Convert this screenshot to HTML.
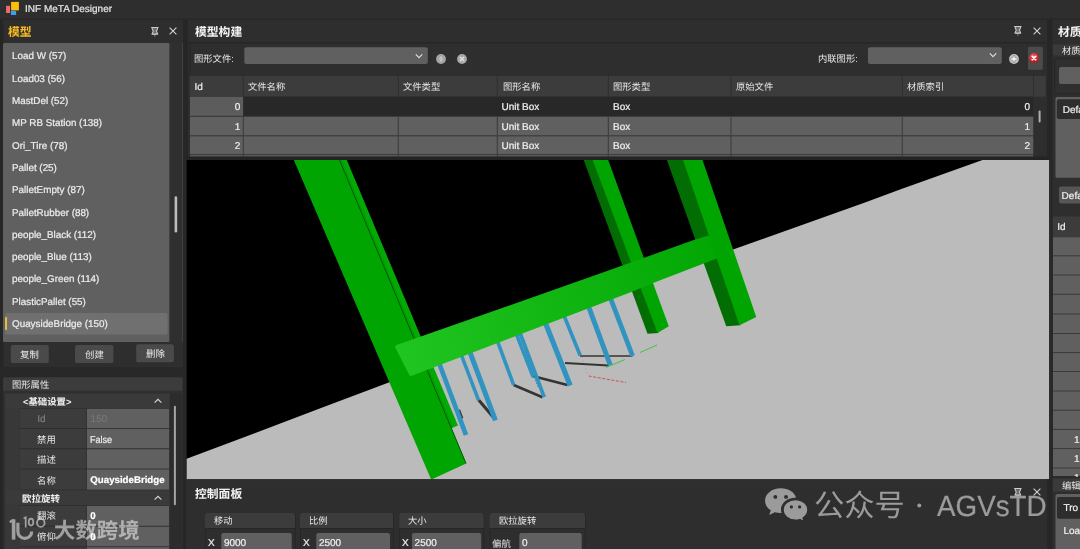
<!DOCTYPE html><html lang="zh"><head><meta charset="utf-8"><title>INF MeTA Designer</title><style>html,body{margin:0;padding:0;background:#2e2e2e}#a{position:relative;width:1080px;height:549px;overflow:hidden;background:#2e2e2e;font-family:"Liberation Sans",sans-serif;text-rendering:geometricPrecision}#a>*,#l>*{position:absolute}#l{left:0;top:0;width:1080px;height:549px;will-change:transform}.t{white-space:nowrap;-webkit-text-stroke:0.22px}.c{overflow:visible;display:block}.c text{font-family:"Liberation Sans","Noto Sans CJK SC",sans-serif;white-space:pre}</style></head><body><div id="a">
<svg class="c" style="left:0;top:0" width="1080" height="549" viewBox="0 0 1080 549"><rect x="0" y="0" width="1080" height="19" fill="#2e2e2e"/>
<rect x="0" y="18.7" width="1080" height="1" fill="#272727"/>
<rect x="11.1" y="1.9" width="7.8" height="8.5" fill="#fdbd0a"/>
<rect x="6.1" y="5.8" width="3.9" height="7.2" fill="#f26a6c"/>
<rect x="10.9" y="10.9" width="5.2" height="4.1" fill="#38a0ee"/>
<rect x="0" y="20" width="183" height="529" fill="#2e2e2e"/>
<rect x="0" y="20" width="3.2" height="529" fill="#262626"/>
<rect x="183" y="20" width="5" height="529" fill="#262626"/>
<rect x="3" y="43" width="179.3" height="299" fill="#2f2f2f" rx="1.5"/>
<rect x="3" y="43" width="166.5" height="299" fill="#606060" rx="1.5"/>
<rect x="169.5" y="43" width="0.8" height="299.4" fill="#3c3c3c"/>
<rect x="174.6" y="196.3" width="2.6" height="36.3" fill="#bcbcbc" rx="1.3"/>
<rect x="182.1" y="43" width="0.8" height="299" fill="#474747"/>
<rect x="5" y="313" width="162.5" height="21.5" fill="#707070" rx="2.5"/>
<rect x="5.1" y="316.9" width="1.9" height="13.1" fill="#ecc03a" rx="0.8"/>
<rect x="10.8" y="345" width="38" height="18" fill="#4a4a4a" rx="2"/>
<rect x="75" y="345" width="38.4" height="18" fill="#4a4a4a" rx="2"/>
<rect x="136.2" y="344.2" width="37.7" height="18" fill="#4a4a4a" rx="2"/>
<rect x="0" y="367" width="183" height="10.3" fill="#282828"/>
<rect x="3" y="377" width="180" height="172" fill="#2f2f2f"/>
<rect x="3.1" y="377.4" width="179.5" height="13.4" fill="#3c3c3c" rx="1.5"/>
<rect x="5" y="393.5" width="164.5" height="155.500" fill="#383838"/>
<rect x="19.7" y="408.2" width="149.3" height="140.8" fill="#2c2c2c"/>
<rect x="170" y="393.5" width="12.5" height="155.500" fill="#2c2c2c"/>
<rect x="173.9" y="405.8" width="2" height="99.4" fill="#a4a4a4" rx="1"/>
<rect x="5" y="394" width="164.5" height="14.2" fill="#3a3a3a"/>
<rect x="19.7" y="408.8" width="66.8" height="19.2" fill="#3c3c3c"/>
<rect x="87" y="408.8" width="82" height="19.2" fill="#606060"/>
<rect x="19.7" y="428.8" width="66.8" height="19.5" fill="#3c3c3c"/>
<rect x="87" y="428.8" width="82" height="19.5" fill="#606060"/>
<rect x="19.7" y="449.2" width="66.8" height="19.4" fill="#3c3c3c"/>
<rect x="87" y="449.2" width="82" height="19.4" fill="#606060"/>
<rect x="19.7" y="469.4" width="66.8" height="20.2" fill="#3c3c3c"/>
<rect x="87" y="469.4" width="82" height="20.2" fill="#606060"/>
<rect x="5" y="490.2" width="164.5" height="15" fill="#3a3a3a"/>
<rect x="19.7" y="505.9" width="66.8" height="19.9" fill="#3c3c3c"/>
<rect x="87" y="505.9" width="82" height="19.9" fill="#606060"/>
<rect x="19.7" y="526.7" width="66.8" height="19.6" fill="#3c3c3c"/>
<rect x="87" y="526.7" width="82" height="19.6" fill="#606060"/>
<rect x="19.7" y="547.1" width="66.8" height="4.9" fill="#3c3c3c"/>
<rect x="87" y="547.1" width="82" height="4.9" fill="#606060"/>
<rect x="188" y="20" width="859" height="140" fill="#2e2e2e"/>
<rect x="1047" y="20" width="6" height="529" fill="#262626"/>
<rect x="189.3" y="42.3" width="857" height="1" fill="#242424"/>
<rect x="189.3" y="42.3" width="1" height="33" fill="#262626"/>
<rect x="244.3" y="47.3" width="183.5" height="16.7" fill="#606060" rx="2"/>
<rect x="432" y="47" width="19" height="23" fill="#2f2f2f" rx="1"/>
<rect x="455" y="47" width="16" height="23" fill="#2f2f2f" rx="1"/>
<rect x="868" y="47.3" width="133.8" height="16.7" fill="#606060" rx="2"/>
<rect x="1006" y="47" width="17" height="23" fill="#2f2f2f" rx="1"/>
<rect x="1028" y="46.8" width="14.9" height="23" fill="#4b4b4b" rx="1.5"/>
<rect x="190" y="76" width="855.6" height="80.600" fill="#2e2e2e"/>
<rect x="190" y="76" width="855.6" height="20.7" fill="#3c3c3c"/>
<rect x="242.8" y="76" width="1" height="20.7" fill="#2f2f2f"/>
<rect x="397.8" y="76" width="1" height="20.7" fill="#2f2f2f"/>
<rect x="496.8" y="76" width="1" height="20.7" fill="#2f2f2f"/>
<rect x="607.8" y="76" width="1" height="20.7" fill="#2f2f2f"/>
<rect x="730.5" y="76" width="1" height="20.7" fill="#2f2f2f"/>
<rect x="901.8" y="76" width="1" height="20.7" fill="#2f2f2f"/>
<rect x="1033" y="76" width="1" height="20.7" fill="#2f2f2f"/>
<rect x="190" y="96.8" width="843.5" height="59.8" fill="#2f2f2f"/>
<rect x="190" y="96.8" width="53.3" height="19" fill="#5c5c5c"/>
<rect x="243.3" y="96.8" width="790.2" height="19" fill="#282828"/>
<rect x="190" y="116.7" width="843.5" height="18.7" fill="#606060"/>
<rect x="242.8" y="116.7" width="1" height="18.7" fill="#3a3a3a"/>
<rect x="397.8" y="116.7" width="1" height="18.7" fill="#3a3a3a"/>
<rect x="496.8" y="116.7" width="1" height="18.7" fill="#3a3a3a"/>
<rect x="607.8" y="116.7" width="1" height="18.7" fill="#3a3a3a"/>
<rect x="730.5" y="116.7" width="1" height="18.7" fill="#3a3a3a"/>
<rect x="901.8" y="116.7" width="1" height="18.7" fill="#3a3a3a"/>
<rect x="190" y="136.3" width="843.5" height="18" fill="#606060"/>
<rect x="242.8" y="136.3" width="1" height="18" fill="#3a3a3a"/>
<rect x="397.8" y="136.3" width="1" height="18" fill="#3a3a3a"/>
<rect x="496.8" y="136.3" width="1" height="18" fill="#3a3a3a"/>
<rect x="607.8" y="136.3" width="1" height="18" fill="#3a3a3a"/>
<rect x="730.5" y="136.3" width="1" height="18" fill="#3a3a3a"/>
<rect x="901.8" y="136.3" width="1" height="18" fill="#3a3a3a"/>
<rect x="190" y="155.1" width="843.5" height="1.5" fill="#606060"/>
<rect x="242.8" y="155.1" width="1" height="1.5" fill="#3a3a3a"/>
<rect x="397.8" y="155.1" width="1" height="1.5" fill="#3a3a3a"/>
<rect x="496.8" y="155.1" width="1" height="1.5" fill="#3a3a3a"/>
<rect x="607.8" y="155.1" width="1" height="1.5" fill="#3a3a3a"/>
<rect x="730.5" y="155.1" width="1" height="1.5" fill="#3a3a3a"/>
<rect x="901.8" y="155.1" width="1" height="1.5" fill="#3a3a3a"/>
<rect x="1033.5" y="97" width="12.1" height="59.6" fill="#2e2e2e"/>
<rect x="1038.6" y="110.5" width="2" height="12" fill="#b0b0b0" rx="1"/>
<rect x="186" y="156.6" width="863" height="3.4" fill="#242424"/>
<svg x="186.5" y="160" width="862.5" height="319.1" viewBox="186.5 160 862.5 319.1"><defs><linearGradient id="bm" gradientUnits="userSpaceOnUse" x1="400" y1="360" x2="715" y2="250"><stop offset="0" stop-color="#20c522"/><stop offset="1" stop-color="#03a704"/></linearGradient></defs><rect x="186" y="160" width="864" height="320" fill="#000"/><path d="M186 459.1L321 408.1L388.75 382.5L733.75 249.2L865 202.5L900 189.6L982.5 160H1050V480H186Z" fill="#bbbbbb"/><path d="M583.7 160L647.5 333.75L658.5 333L594 160Z" fill="#026d02"/><path d="M592.6 160L657.5 333L668.75 326.25L608.2 160Z" fill="#01a501"/><path d="M666.9 160L726.25 326.25L740.6 325.3L684.4 160Z" fill="#026d02"/><path d="M459 409.8L462.2 418.5" stroke="#343434" stroke-width="2.4"/><path d="M478.7 400L493.7 417.8" stroke="#343434" stroke-width="3"/><path d="M513.7 385L542.5 397.2" stroke="#343434" stroke-width="2.6"/><path d="M532.5 376L567.5 385" stroke="#343434" stroke-width="2.5"/><path d="M565 363L608.7 365.5" stroke="#343434" stroke-width="1.8"/><path d="M580 356L632.5 356" stroke="#343434" stroke-width="1.4"/><path d="M438.03 360.26L466 435" stroke="#3193c0" stroke-width="4.7"/><path d="M461.21 354.61L478.6 400.4" stroke="#3193c0" stroke-width="3.5"/><path d="M468.83 349.24L495.4 420.3" stroke="#3193c0" stroke-width="5"/><path d="M497.72 341.82L513.6 384.8" stroke="#3193c0" stroke-width="3.6"/><path d="M515.61 332.29L533 377" stroke="#3193c0" stroke-width="3.4"/><path d="M518.71 329.38L544.2 397.2" stroke="#3193c0" stroke-width="3.8"/><path d="M544.28 320.16L570.2 385.5" stroke="#3193c0" stroke-width="5.2"/><path d="M563.57 314.46L580.2 355.5" stroke="#3193c0" stroke-width="3.6"/><path d="M587.2 302.9L610.2 365" stroke="#3193c0" stroke-width="5"/><path d="M609.49 295.52L632.6 356" stroke="#3193c0" stroke-width="4.8"/><path d="M518.6 334.8L538.6 387" stroke="#3193c0" stroke-width="2.2" stroke-dasharray="1.6 1.4"/><path d="M606 367.5L625 359.5M640 352.5L657 345" stroke="#35c135" stroke-width="0.9"/><path d="M588.7 376L626 382.5" stroke="#d24545" stroke-width="0.9" stroke-dasharray="3 1.6"/><path d="M578.7 348.7L587.5 373.7" stroke="#6a6ad8" stroke-width="0.7" stroke-dasharray="1 3.2" opacity="0.8"/><path d="M339.2 160L346.8 160L458 425.4L451.4 428.2Z" fill="#03a904"/><path d="M293.8 160L339.8 160L466.2 463.4L431.2 479.6Z" fill="#01a501"/><path d="M339.5 160L466 463.4" stroke="#035a03" stroke-width="1"/><path d="M341.2 160L452.6 427.6" stroke="#068a06" stroke-width="0.6"/><path d="M396.6 345.1L600 273.6L693.75 240L712 234.4L720 257.2L653.75 282.8L630 292.6L411.8 375.7Q409.8 376.5 409 374.5L395.3 347.5Q394.5 345.8 396.6 345.1Z" fill="url(#bm)"/><path d="M683.1 160L739.5 325.3L756.25 317L702.5 160Z" fill="#01a501"/></svg>
<rect x="183" y="160" width="3.4" height="319" fill="#272727"/>
<rect x="1049" y="160" width="2" height="319" fill="#2c2c2c"/>
<rect x="186" y="479" width="861" height="70" fill="#2e2e2e"/>
<rect x="186" y="479" width="861" height="1.5" fill="#333"/>
<rect x="205" y="513" width="90.6" height="39" fill="#262626" rx="2"/>
<rect x="205.9" y="514" width="88.8" height="38" fill="#2e2e2e"/>
<rect x="205" y="513" width="90" height="15" fill="#3c3c3c" rx="2"/>
<rect x="205" y="526" width="90" height="2" fill="#3c3c3c"/>
<rect x="205" y="528" width="90.6" height="1" fill="#272727"/>
<rect x="300" y="513" width="93.6" height="39" fill="#262626" rx="2"/>
<rect x="300.9" y="514" width="91.8" height="38" fill="#2e2e2e"/>
<rect x="300" y="513" width="93" height="15" fill="#3c3c3c" rx="2"/>
<rect x="300" y="526" width="93" height="2" fill="#3c3c3c"/>
<rect x="300" y="528" width="93.6" height="1" fill="#272727"/>
<rect x="399.3" y="513" width="85" height="39" fill="#262626" rx="2"/>
<rect x="400.2" y="514" width="83.2" height="38" fill="#2e2e2e"/>
<rect x="399.3" y="513" width="84.4" height="15" fill="#3c3c3c" rx="2"/>
<rect x="399.3" y="526" width="84.4" height="2" fill="#3c3c3c"/>
<rect x="399.3" y="528" width="85" height="1" fill="#272727"/>
<rect x="489.5" y="513" width="96.1" height="39" fill="#262626" rx="2"/>
<rect x="490.4" y="514" width="94.3" height="38" fill="#2e2e2e"/>
<rect x="489.5" y="513" width="95.5" height="15" fill="#3c3c3c" rx="2"/>
<rect x="489.5" y="526" width="95.5" height="2" fill="#3c3c3c"/>
<rect x="489.5" y="528" width="96.1" height="1" fill="#272727"/>
<rect x="221.3" y="533" width="70.4" height="19" fill="#606060" rx="2"/>
<rect x="316.3" y="533" width="73.7" height="19" fill="#606060" rx="2"/>
<rect x="412" y="533" width="69.2" height="19" fill="#606060" rx="2"/>
<rect x="519.3" y="533" width="62.4" height="19" fill="#606060" rx="2"/>
<rect x="917.3" y="503.4" width="4" height="4" fill="#9b9b9b" rx="2"/>
<rect x="1052.5" y="20" width="27.5" height="529" fill="#2e2e2e"/>
<rect x="1052.8" y="44.5" width="27.2" height="11" fill="#3a3a3a"/>
<rect x="1054.6" y="58.8" width="27.4" height="35" fill="#2f2f2f" rx="1" stroke="#262626"/>
<rect x="1059" y="67" width="25" height="17" fill="#606060" rx="2"/>
<rect x="1055.5" y="97" width="26.5" height="80.8" fill="#606060" rx="1.5"/>
<rect x="1056.8" y="99.3" width="25.2" height="19.7" fill="#2d2d2d" rx="2"/>
<rect x="1059" y="186.5" width="25" height="16.9" fill="#555" rx="2"/>
<rect x="1053" y="216.5" width="27" height="20.8" fill="#3c3c3c"/>
<rect x="1053" y="237.3" width="27" height="238.7" fill="#606060"/>
<rect x="1053" y="255.3" width="27" height="1" fill="#3a3a3a"/>
<rect x="1053" y="274.5" width="27" height="1" fill="#3a3a3a"/>
<rect x="1053" y="293.8" width="27" height="1" fill="#3a3a3a"/>
<rect x="1053" y="313.5" width="27" height="1" fill="#3a3a3a"/>
<rect x="1053" y="333" width="27" height="1" fill="#3a3a3a"/>
<rect x="1053" y="352.1" width="27" height="1" fill="#3a3a3a"/>
<rect x="1053" y="371" width="27" height="1" fill="#3a3a3a"/>
<rect x="1053" y="390.5" width="27" height="1" fill="#3a3a3a"/>
<rect x="1053" y="409.7" width="27" height="1" fill="#3a3a3a"/>
<rect x="1053" y="428.9" width="27" height="1" fill="#3a3a3a"/>
<rect x="1053" y="448.1" width="27" height="1" fill="#3a3a3a"/>
<rect x="1053" y="467.5" width="27" height="1" fill="#3a3a3a"/>
<rect x="1053" y="476" width="27" height="2.5" fill="#2b2b2b"/>
<rect x="1053" y="478.5" width="27" height="13" fill="#3a3a3a"/>
<rect x="1055.5" y="494" width="26.5" height="58" fill="#606060" rx="2"/>
<rect x="1057" y="497" width="25" height="21.7" fill="#2d2d2d" rx="2"/></svg>
<div id="l">
<div class="t" style="top:3px;font-size:10px;line-height:14px;color:#e4e4e4;left:25px;">INF MeTA Designer</div>
<svg class="c" style="left:8px;top:23.14px;" width="23.6" height="16.52" fill="#f6bb24"><text x="0" y="12.51" font-size="11.8" font-weight="bold">模型</text></svg>
<svg class="c" style="left:150.35px;top:26.06px" width="9.7" height="12.61" viewBox="0 0 10 13" fill="none" stroke="#cdcdcd" stroke-width="1.1"><path d="M1.2 1.5H8.8M2 1.6Q2.3 4.2 3.5 5.2Q2.6 6.600 2.1 8.2H7.9Q7.4 6.600 6.500 5.2Q7.7 4.2 8 1.600" fill="#6c6c6c"/><path d="M2.2 8.3Q5 9.8 7.8 8.3" stroke-width="0.9"/><path d="M5 9.2V11.600" stroke-opacity="0.3"/></svg>
<svg class="c" style="left:168.4px;top:26px" width="10" height="10" viewBox="-5 -5 10 10" fill="none" stroke="#d4d4d4" stroke-width="1.05"><path d="M-3.4 -3.4L3.4 3.4M3.4 -3.4L-3.4 3.4"/></svg>
<div class="t" style="top:50px;font-size:9.85px;line-height:14px;color:#ececec;left:12px;">Load W (57)</div>
<div class="t" style="top:73px;font-size:9.85px;line-height:14px;color:#ececec;left:12px;">Load03 (56)</div>
<div class="t" style="top:95px;font-size:9.85px;line-height:14px;color:#ececec;left:12px;">MastDel (52)</div>
<div class="t" style="top:117px;font-size:9.85px;line-height:14px;color:#ececec;left:12px;">MP RB Station (138)</div>
<div class="t" style="top:140px;font-size:9.85px;line-height:14px;color:#ececec;left:12px;">Ori_Tire (78)</div>
<div class="t" style="top:162px;font-size:9.85px;line-height:14px;color:#ececec;left:12px;">Pallet (25)</div>
<div class="t" style="top:184px;font-size:9.85px;line-height:14px;color:#ececec;left:12px;">PalletEmpty (87)</div>
<div class="t" style="top:207px;font-size:9.85px;line-height:14px;color:#ececec;left:12px;">PalletRubber (88)</div>
<div class="t" style="top:229px;font-size:9.85px;line-height:14px;color:#ececec;left:12px;">people_Black (112)</div>
<div class="t" style="top:251px;font-size:9.85px;line-height:14px;color:#ececec;left:12px;">people_Blue (113)</div>
<div class="t" style="top:273px;font-size:9.85px;line-height:14px;color:#ececec;left:12px;">people_Green (114)</div>
<div class="t" style="top:296px;font-size:9.85px;line-height:14px;color:#ececec;left:12px;">PlasticPallet (55)</div>
<div class="t" style="top:318px;font-size:9.85px;line-height:14px;color:#ececec;left:12px;">QuaysideBridge (150)</div>
<svg class="c" style="left:20.4px;top:348.02px;" width="18.8" height="13.16" fill="#e8e8e8"><text x="0" y="9.96" font-size="9.4">复制</text></svg>
<svg class="c" style="left:84.8px;top:348.02px;" width="18.8" height="13.16" fill="#e8e8e8"><text x="0" y="9.96" font-size="9.4">创建</text></svg>
<svg class="c" style="left:145.65px;top:347.22px;" width="18.8" height="13.16" fill="#e8e8e8"><text x="0" y="9.96" font-size="9.4">删除</text></svg>
<svg class="c" style="left:11.8px;top:377.99px;" width="37.2" height="13.02" fill="#e8e8e8"><text x="0" y="9.86" font-size="9.3">图形属性</text></svg>
<svg class="c" style="left:23.3px;top:394.82px;" width="48.69" height="13.16" fill="#f0f0f0"><text x="0" y="9.96" font-size="9.4" font-weight="bold">&lt;基础设置&gt;</text></svg>
<svg class="c" style="left:152.5px;top:397.3px" width="10" height="8" viewBox="-5 -4 10 8" fill="none" stroke="#d8d8d8" stroke-width="1.1"><path d="M-3.4 1.7L0 -1.7L3.4 1.7"/></svg>
<div class="t" style="top:413px;font-size:10px;line-height:14px;color:#7d7d7d;left:37.3px;">Id</div>
<div class="t" style="top:413px;font-size:10px;line-height:14px;color:#767676;left:90.6px;">150</div>
<svg class="c" style="left:36.9px;top:433.12px;" width="18.8" height="13.16" fill="#e4e4e4"><text x="0" y="9.96" font-size="9.4">禁用</text></svg>
<div class="t" style="top:434px;font-size:10px;line-height:14px;color:#ececec;left:90.3px;transform:scaleX(0.9);transform-origin:0 0;">False</div>
<svg class="c" style="left:36.9px;top:453.42px;" width="18.8" height="13.16" fill="#e4e4e4"><text x="0" y="9.96" font-size="9.4">描述</text></svg>
<svg class="c" style="left:36.9px;top:474.02px;" width="18.8" height="13.16" fill="#e4e4e4"><text x="0" y="9.96" font-size="9.4">名称</text></svg>
<div class="t" style="top:474px;font-size:9.7px;line-height:14px;color:#ffffff;font-weight:bold;left:90.3px;">QuaysideBridge</div>
<svg class="c" style="left:22.3px;top:491.65px;" width="38" height="13.3" fill="#f0f0f0"><text x="0" y="10.07" font-size="9.5" font-weight="bold">欧拉旋转</text></svg>
<svg class="c" style="left:152.5px;top:494.2px" width="10" height="8" viewBox="-5 -4 10 8" fill="none" stroke="#d8d8d8" stroke-width="1.1"><path d="M-3.4 1.7L0 -1.7L3.4 1.7"/></svg>
<svg class="c" style="left:36.9px;top:509.32px;" width="18.8" height="13.16" fill="#e4e4e4"><text x="0" y="9.96" font-size="9.4">翻滚</text></svg>
<div class="t" style="top:510px;font-size:9.7px;line-height:14px;color:#ffffff;font-weight:bold;left:90.3px;">0</div>
<svg class="c" style="left:36.9px;top:530.42px;" width="18.8" height="13.16" fill="#e4e4e4"><text x="0" y="9.96" font-size="9.4">俯仰</text></svg>
<div class="t" style="top:531px;font-size:9.7px;line-height:14px;color:#ffffff;font-weight:bold;left:90.3px;">0</div>
<svg class="c" style="left:36.9px;top:553.42px;" width="5.64" height="13.16" fill="#e4e4e4"></svg>
<svg class="c" style="left:194.8px;top:22.94px;" width="47.2" height="16.52" fill="#f4f4f4"><text x="0" y="12.51" font-size="11.8" font-weight="bold">模型构建</text></svg>
<svg class="c" style="left:1013.15px;top:25.46px" width="9.7" height="12.61" viewBox="0 0 10 13" fill="none" stroke="#cdcdcd" stroke-width="1.1"><path d="M1.2 1.5H8.8M2 1.6Q2.3 4.2 3.5 5.2Q2.6 6.600 2.1 8.2H7.9Q7.4 6.600 6.500 5.2Q7.7 4.2 8 1.600" fill="#6c6c6c"/><path d="M2.2 8.3Q5 9.8 7.8 8.3" stroke-width="0.9"/><path d="M5 9.2V11.600" stroke-opacity="0.3"/></svg>
<svg class="c" style="left:1031.6px;top:25.8px" width="10" height="10" viewBox="-5 -5 10 10" fill="none" stroke="#d4d4d4" stroke-width="1.05"><path d="M-3.4 -3.4L3.4 3.4M3.4 -3.4L-3.4 3.4"/></svg>
<svg class="c" style="left:194.2px;top:51.89px;" width="39.79" height="13.02" fill="#e8e8e8"><text x="0" y="9.86" font-size="9.3">图形文件:</text></svg>
<svg class="c" style="left:414px;top:51.6px" width="10" height="8" viewBox="-5 -4 10 8" fill="none" stroke="#e0e0e0" stroke-width="1.1"><path d="M-3.2 -1.6L0 1.7L3.2 -1.6"/></svg>
<svg class="c" style="left:434.5px;top:52.8px" width="12" height="12" viewBox="-6 -6 12 12"><circle r="4.9" fill="#ababab"/><circle r="3.6" fill="none" stroke="#9c9c9c" stroke-width="0.8"/><path d="M0 -2.6V2.6" stroke="#d8d8d8" stroke-width="1.1"/><path d="M-2.4 0H2.4" stroke="#bcbcbc" stroke-width="1"/></svg>
<svg class="c" style="left:456px;top:52.8px" width="12" height="12" viewBox="-6 -6 12 12"><circle r="4.9" fill="#a9a9a9"/><path d="M-2 -2L2 2M2 -2L-2 2" stroke="#dedede" stroke-width="1.5"/></svg>
<svg class="c" style="left:818.3px;top:51.89px;" width="39.79" height="13.02" fill="#e8e8e8"><text x="0" y="9.86" font-size="9.3">内联图形:</text></svg>
<svg class="c" style="left:988.2px;top:51.4px" width="10" height="8" viewBox="-5 -4 10 8" fill="none" stroke="#e0e0e0" stroke-width="1.1"><path d="M-3.2 -1.6L0 1.7L3.2 -1.6"/></svg>
<svg class="c" style="left:1007.5px;top:52.5px" width="12" height="12" viewBox="-6 -6 12 12"><circle r="4.9" fill="#c4c4c4"/><path d="M-3.4 0H3.4M0 -3.4V3.4" stroke="#7c7c7c" stroke-width="2.6"/><path d="M-2.8 0H2.8M0 -2.8V2.8" stroke="#fff" stroke-width="1.3"/></svg>
<svg class="c" style="left:1028.2px;top:52.4px" width="12" height="12" viewBox="-6 -6 12 12"><defs><radialGradient id="rg" cx="0.4" cy="0.3" r="0.8"><stop offset="0" stop-color="#ee5a5a"/><stop offset="0.6" stop-color="#d02626"/><stop offset="1" stop-color="#9c1616"/></radialGradient></defs><circle r="5" fill="url(#rg)"/><path d="M-1.7 -1.7L1.7 1.7M1.7 -1.7L-1.7 1.7" stroke="#fff" stroke-width="1.7" stroke-linecap="round"/></svg>
<div class="t" style="top:81px;font-size:10px;line-height:14px;color:#ececec;left:194.4px;">Id</div>
<svg class="c" style="left:248.3px;top:80.29px;" width="37.2" height="13.02" fill="#e8e8e8"><text x="0" y="9.86" font-size="9.3">文件名称</text></svg>
<svg class="c" style="left:403.3px;top:80.29px;" width="37.2" height="13.02" fill="#e8e8e8"><text x="0" y="9.86" font-size="9.3">文件类型</text></svg>
<svg class="c" style="left:502.7px;top:80.29px;" width="37.2" height="13.02" fill="#e8e8e8"><text x="0" y="9.86" font-size="9.3">图形名称</text></svg>
<svg class="c" style="left:613.3px;top:80.29px;" width="37.2" height="13.02" fill="#e8e8e8"><text x="0" y="9.86" font-size="9.3">图形类型</text></svg>
<svg class="c" style="left:736px;top:80.29px;" width="37.2" height="13.02" fill="#e8e8e8"><text x="0" y="9.86" font-size="9.3">原始文件</text></svg>
<svg class="c" style="left:907px;top:80.29px;" width="37.2" height="13.02" fill="#e8e8e8"><text x="0" y="9.86" font-size="9.3">材质索引</text></svg>
<div class="t" style="top:101px;font-size:10px;line-height:14px;color:#f0f0f0;right:839.7px;text-align:right;">0</div>
<div class="t" style="top:101px;font-size:10px;line-height:14px;color:#f0f0f0;left:501.5px;">Unit Box</div>
<div class="t" style="top:101px;font-size:10px;line-height:14px;color:#f0f0f0;left:613px;">Box</div>
<div class="t" style="top:101px;font-size:10px;line-height:14px;color:#f0f0f0;right:50px;text-align:right;">0</div>
<div class="t" style="top:121px;font-size:10px;line-height:14px;color:#f0f0f0;right:839.7px;text-align:right;">1</div>
<div class="t" style="top:121px;font-size:10px;line-height:14px;color:#f0f0f0;left:501.5px;">Unit Box</div>
<div class="t" style="top:121px;font-size:10px;line-height:14px;color:#f0f0f0;left:613px;">Box</div>
<div class="t" style="top:121px;font-size:10px;line-height:14px;color:#f0f0f0;right:50px;text-align:right;">1</div>
<div class="t" style="top:140px;font-size:10px;line-height:14px;color:#f0f0f0;right:839.7px;text-align:right;">2</div>
<div class="t" style="top:140px;font-size:10px;line-height:14px;color:#f0f0f0;left:501.5px;">Unit Box</div>
<div class="t" style="top:140px;font-size:10px;line-height:14px;color:#f0f0f0;left:613px;">Box</div>
<div class="t" style="top:140px;font-size:10px;line-height:14px;color:#f0f0f0;right:50px;text-align:right;">2</div>
<svg class="c" style="left:194.8px;top:484.94px;" width="47.2" height="16.52" fill="#f4f4f4"><text x="0" y="12.51" font-size="11.8" font-weight="bold">控制面板</text></svg>
<svg class="c" style="left:1013.35px;top:487.27px" width="9.7" height="12.61" viewBox="0 0 10 13" fill="none" stroke="#cdcdcd" stroke-width="1.1"><path d="M1.2 1.5H8.8M2 1.6Q2.3 4.2 3.5 5.2Q2.6 6.600 2.1 8.2H7.9Q7.4 6.600 6.500 5.2Q7.7 4.2 8 1.600" fill="#6c6c6c"/><path d="M2.2 8.3Q5 9.8 7.8 8.3" stroke-width="0.9"/><path d="M5 9.2V11.600" stroke-opacity="0.3"/></svg>
<svg class="c" style="left:1031.6px;top:487.3px" width="10" height="10" viewBox="-5 -5 10 10" fill="none" stroke="#d4d4d4" stroke-width="1.05"><path d="M-3.4 -3.4L3.4 3.4M3.4 -3.4L-3.4 3.4"/></svg>
<svg class="c" style="left:213.7px;top:514.29px;" width="18.6" height="13.02" fill="#e8e8e8"><text x="0" y="9.86" font-size="9.3">移动</text></svg>
<svg class="c" style="left:308.7px;top:514.29px;" width="18.6" height="13.02" fill="#e8e8e8"><text x="0" y="9.86" font-size="9.3">比例</text></svg>
<svg class="c" style="left:407.5px;top:514.29px;" width="18.6" height="13.02" fill="#e8e8e8"><text x="0" y="9.86" font-size="9.3">大小</text></svg>
<svg class="c" style="left:498.7px;top:514.29px;" width="37.2" height="13.02" fill="#e8e8e8"><text x="0" y="9.86" font-size="9.3">欧拉旋转</text></svg>
<div class="t" style="top:537px;font-size:10px;line-height:14px;color:#e8e8e8;left:208px;">X</div>
<div class="t" style="top:537px;font-size:10px;line-height:14px;color:#f0f0f0;left:223.9px;">9000</div>
<div class="t" style="top:537px;font-size:10px;line-height:14px;color:#e8e8e8;left:303px;">X</div>
<div class="t" style="top:537px;font-size:10px;line-height:14px;color:#f0f0f0;left:318.9px;">2500</div>
<div class="t" style="top:537px;font-size:10px;line-height:14px;color:#e8e8e8;left:402px;">X</div>
<div class="t" style="top:537px;font-size:10px;line-height:14px;color:#f0f0f0;left:414.6px;">2500</div>
<svg class="c" style="left:492px;top:536.62px;" width="18.8" height="13.16" fill="#e8e8e8"><text x="0" y="9.96" font-size="9.4">偏航</text></svg>
<div class="t" style="top:537px;font-size:10px;line-height:14px;color:#f0f0f0;left:522px;">0</div>
<svg class="c" style="left:764px;top:487.3px" width="45.3" height="38.1" viewBox="0 0 44 37"><path d="M16.2 1.2C7.8 1.2 1 6.6 1 13.3c0 3.8 2.2 7.2 5.6 9.4l-1.5 4.6 5.4-2.8c1.8.5 3.6.8 5.7.8h.9c-.4-1.1-.6-2.3-.6-3.5 0-6.3 6.1-11.4 13.6-11.4h1C29.9 5.100 23.700 1.2 16.2 1.200z" fill="#9b9b9b"/><circle cx="11" cy="9.6" r="1.9" fill="#2e2e2e"/><circle cx="21.4" cy="9.6" r="1.9" fill="#2e2e2e"/><path d="M42.6 22.200c0-5.500-5.400-10-12-10s-12 4.500-12 10 5.400 10 12 10c1.500 0 2.900-.2 4.200-.6l4.300 2.300-1.200-3.800c2.900-1.900 4.700-4.700 4.700-7.900z" fill="#9b9b9b" stroke="#2e2e2e" stroke-width="1.2"/><circle cx="26.6" cy="19.4" r="1.6" fill="#2e2e2e"/><circle cx="34.600" cy="19.4" r="1.6" fill="#2e2e2e"/></svg>
<svg class="c" style="left:814.2px;top:484.39px;" width="90.9" height="42.42" fill="#9b9b9b"><text x="0" y="32.12" font-size="30.3">公众号</text></svg>
<div class="t" style="top:489px;font-size:29.2px;line-height:36px;color:#9b9b9b;left:937.3px;transform:scaleX(0.952);transform-origin:0 0;">AGVsTD</div>
<svg class="c" style="left:1057.6px;top:23.14px;" width="23.6" height="16.52" fill="#f4f4f4"><text x="0" y="12.51" font-size="11.8" font-weight="bold">材质</text></svg>
<svg class="c" style="left:1061.6px;top:43.69px;" width="18.6" height="13.02" fill="#e8e8e8"><text x="0" y="9.86" font-size="9.3">材质</text></svg>
<div class="t" style="top:104px;font-size:10px;line-height:14px;color:#f0f0f0;left:1062.7px;">Defa</div>
<div class="t" style="top:190px;font-size:10px;line-height:14px;color:#f0f0f0;left:1061.6px;">Defa</div>
<div class="t" style="top:221px;font-size:10px;line-height:14px;color:#f0f0f0;left:1057.2px;">Id</div>
<div class="t" style="top:434px;font-size:10px;line-height:14px;color:#f0f0f0;right:0.5px;text-align:right;">1</div>
<div class="t" style="top:453px;font-size:10px;line-height:14px;color:#f0f0f0;right:0.5px;text-align:right;">1</div>
<div class="t" style="top:472px;font-size:10px;line-height:14px;color:#f0f0f0;right:0.5px;text-align:right;clip-path:inset(0 0 9px 0);">1</div>
<svg class="c" style="left:1062px;top:478.59px;" width="18.6" height="13.02" fill="#e8e8e8"><text x="0" y="9.86" font-size="9.3">编辑</text></svg>
<div class="t" style="top:502px;font-size:10px;line-height:14px;color:#f0f0f0;left:1063.5px;">Tro</div>
<div class="t" style="top:525px;font-size:10px;line-height:14px;color:#f0f0f0;left:1063.5px;">Loa</div>
<svg class="c" style="left:0;top:505px;opacity:0.52" width="60" height="44" viewBox="0 505 60 44" fill="none" stroke="#ffffff"><path d="M9.8 522.3L13.6 519.7" stroke-width="2.6"/><path d="M13.6 519.3V539.6" stroke-width="3.6"/><path d="M17.9 522.7V531.4A6.9 6.9 0 0 0 31.700 531.4" stroke-width="3.2"/><path d="M23.6 518.6L25.700 517.3V527.5" stroke-width="1.7"/><ellipse cx="31" cy="522.1" rx="2.3" ry="3.5" stroke-width="1.7"/><ellipse cx="40.800" cy="522.9" rx="3.8" ry="4.0" stroke-width="1.8"/></svg>
<svg class="c" style="left:53.6px;top:514.82px;opacity:0.52;" width="85.6" height="29.96" fill="#ffffff"><text x="0" y="22.68" font-size="21.4" font-weight="bold">大数跨境</text></svg>
</div>
</div></body></html>
